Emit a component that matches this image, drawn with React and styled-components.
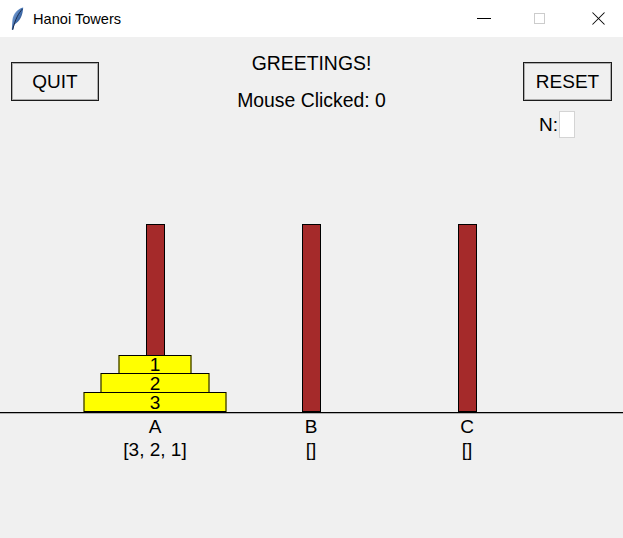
import styled, { createGlobalStyle } from "styled-components";

const GlobalStyle = createGlobalStyle`
  html, body {
    margin: 0;
    padding: 0;
    background: #f0f0f0;
  }
  body {
    font-family: "Liberation Sans", Arial, sans-serif;
    color: #000;
  }
`;

const towers = [
  { name: "A", disks: [3, 2, 1] },
  { name: "B", disks: [] },
  { name: "C", disks: [] },
];

const diskWidths = { 1: 73, 2: 109, 3: 143 };

const Feather = () => (
  <svg width="14" height="24" viewBox="0 0 14 24">
    <defs>
      <linearGradient id="quill" x1="0" y1="0" x2="1" y2="1">
        <stop offset="0" stopColor="#9dbce6" />
        <stop offset="0.5" stopColor="#4270b0" />
        <stop offset="1" stopColor="#1d3054" />
      </linearGradient>
    </defs>
    <path
      d="M13.2 0.6 C8 1.8 3.2 6.4 2.4 13.2 L1.8 22.8 L3.2 23 L4.6 17.4 C10 14.6 12.8 8.4 13.2 0.6 Z"
      fill="url(#quill)"
    />
    <path d="M12.4 2 C8.6 6.4 5.6 11.4 2.6 22.6" stroke="#16243f" strokeWidth="0.9" fill="none" />
  </svg>
);

export default function App() {
  return (
    <>
      <GlobalStyle />
      <Window>
        <TitleBar>
          <Feather />
          <TitleText>Hanoi Towers</TitleText>
          <Controls>
            <ControlButton $w={56}>
              <MinGlyph />
            </ControlButton>
            <ControlButton $w={54}>
              <MaxGlyph />
            </ControlButton>
            <ControlButton $w={57} $shift={7}>
              <CloseGlyph />
            </ControlButton>
          </Controls>
        </TitleBar>

        <Main>
          <Header>
            <LeftCol>
              <Button $w={88}>QUIT</Button>
            </LeftCol>
            <CenterCol>
              <Line>GREETINGS!</Line>
              <Line>Mouse Clicked: 0</Line>
            </CenterCol>
            <RightCol>
              <Button $w={89}>RESET</Button>
              <NRow>
                <NLabel>N:</NLabel>
                <NInput />
              </NRow>
            </RightCol>
          </Header>

          <Stage>
            {towers.map((t) => (
              <Tower key={t.name}>
                <Peg />
                <DiskStack>
                  {[...t.disks].reverse().map((d) => (
                    <Disk key={d} style={{ width: diskWidths[d] }}>
                      {d}
                    </Disk>
                  ))}
                </DiskStack>
              </Tower>
            ))}
          </Stage>

          <Labels>
            {towers.map((t) => (
              <Label key={t.name}>
                <div>{t.name}</div>
                <div>[{t.disks.join(", ")}]</div>
              </Label>
            ))}
          </Labels>
        </Main>
      </Window>
    </>
  );
}

const Window = styled.div`
  width: 623px;
  height: 538px;
  display: flex;
  flex-direction: column;
  overflow: hidden;
`;

const TitleBar = styled.div`
  height: 37px;
  flex-shrink: 0;
  background: #fff;
  display: flex;
  align-items: center;
  padding-left: 10px;
`;

const TitleText = styled.span`
  margin-left: 9px;
  font-family: "Liberation Sans", Arial, sans-serif;
  font-size: 14.6px;
  color: #000;
`;

const Controls = styled.div`
  margin-left: auto;
  display: flex;
  height: 100%;
`;

const ControlButton = styled.div`
  width: ${(p) => p.$w}px;
  height: 100%;
  display: flex;
  align-items: center;
  justify-content: center;
  padding-left: ${(p) => p.$shift || 0}px;
  box-sizing: border-box;
`;

const MinGlyph = styled.div`
  width: 14px;
  height: 1px;
  background: #000;
`;

const MaxGlyph = styled.div`
  width: 11px;
  height: 11px;
  box-sizing: border-box;
  border: 1px solid #cccccc;
`;

const CloseGlyph = styled.div`
  position: relative;
  width: 13px;
  height: 13px;

  &::before,
  &::after {
    content: "";
    position: absolute;
    left: -2px;
    top: 6px;
    width: 17px;
    height: 1px;
    background: #000;
    transform: rotate(45deg);
  }
  &::after {
    transform: rotate(-45deg);
  }
`;

const Main = styled.div`
  flex: 1;
  background: #f0f0f0;
  display: flex;
  flex-direction: column;
  font-size: 19px;
`;

const Header = styled.div`
  height: 187px;
  flex-shrink: 0;
  display: grid;
  grid-template-columns: 1fr auto 1fr;
  align-items: start;
  padding: 0 11px;
`;

const LeftCol = styled.div`
  display: flex;
  justify-content: flex-start;
`;

const CenterCol = styled.div`
  padding-top: 15px;
  display: flex;
  flex-direction: column;
  align-items: center;
  gap: 15px;
`;

const Line = styled.div`
  line-height: 22px;
  font-size: 19.4px;
`;

const RightCol = styled.div`
  display: flex;
  flex-direction: column;
  align-items: flex-end;
`;

const Button = styled.div`
  margin-top: 25px;
  width: ${(p) => p.$w}px;
  height: 39px;
  box-sizing: border-box;
  border: 1px solid #1c1c1c;
  box-shadow: inset 0 0 0 1px rgba(0, 0, 0, 0.28);
  display: flex;
  align-items: center;
  justify-content: center;
  font-size: 19px;
`;

const NRow = styled.div`
  margin-top: 10px;
  margin-right: 37px;
  display: flex;
  align-items: center;
`;

const NLabel = styled.span`
  line-height: 22px;
  margin-right: 1px;
`;

const NInput = styled.div`
  width: 16px;
  height: 27px;
  box-sizing: border-box;
  background: #fff;
  border: 1px solid #d4d4d4;
`;

const Stage = styled.div`
  height: 188px;
  flex-shrink: 0;
  border-bottom: 1px solid #000;
  box-shadow: 0 1px 0 #b0b0b0;
  display: grid;
  grid-template-columns: repeat(3, 156px);
  padding-left: 77px;
`;

const Tower = styled.div`
  position: relative;
  display: flex;
  justify-content: center;
`;

const Peg = styled.div`
  width: 19px;
  height: 100%;
  box-sizing: border-box;
  background: #a52a2a;
  border: 1px solid #000;
`;

const DiskStack = styled.div`
  position: absolute;
  bottom: 0;
  left: 50%;
  transform: translateX(-50%);
  display: flex;
  flex-direction: column;
  align-items: center;
`;

const Disk = styled.div`
  height: 20px;
  box-sizing: border-box;
  padding-top: 1px;
  background: #ffff00;
  border: 1px solid #000;
  font-size: 19px;
  line-height: 17px;
  text-align: center;

  &:first-child {
    height: 19px;
    padding-top: 0;
  }

  & + & {
    margin-top: -1px;
  }
`;

const Labels = styled.div`
  display: grid;
  grid-template-columns: repeat(3, 156px);
  padding-left: 77px;
  padding-top: 2px;
`;

const Label = styled.div`
  text-align: center;
  line-height: 23px;
`;
